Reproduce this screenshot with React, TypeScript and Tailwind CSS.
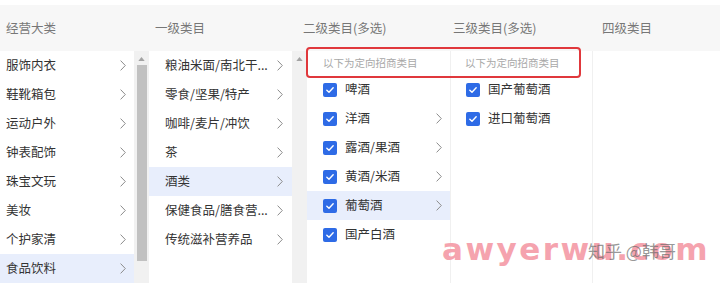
const level1 = ['服饰内衣', '鞋靴箱包', '运动户外', '钟表配饰', '珠宝文玩', '美妆', '个护家清', '食品饮料'];
const level2 = ['粮油米面/南北干...', '零食/坚果/特产', '咖啡/麦片/冲饮', '茶', '酒类', '保健食品/膳食营...', '传统滋补营养品'];
const level3 = [
  { name: '啤酒', more: false },
  { name: '洋酒', more: true },
  { name: '露酒/果酒', more: true },
  { name: '黄酒/米酒', more: true },
  { name: '葡萄酒', more: true },
  { name: '国产白酒', more: false },
];
const level4 = ['国产葡萄酒', '进口葡萄酒'];

function Arrow() {
  return (
    <svg viewBox="0 0 6 11" className="w-[6px] h-[11px] shrink-0" fill="none">
      <path d="M0.6 0.6 5.3 5.5 0.6 10.4" stroke="#8c8c8c" strokeWidth="1" />
    </svg>
  );
}

function Check() {
  return (
    <span className="w-[14px] h-[14px] rounded-[2px] bg-[#2e6be6] flex items-center justify-center shrink-0">
      <svg viewBox="0 0 12 12" className="w-[10px] h-[10px]" fill="none">
        <path d="M2.2 6.2 4.8 8.6 9.8 3.4" stroke="white" strokeWidth="1.7" strokeLinecap="round" strokeLinejoin="round" />
      </svg>
    </span>
  );
}

function ScrollTrack({ thumb }: { thumb: boolean }) {
  return (
    <div className="w-[15px] bg-[#f1f1f1] flex flex-col items-center pt-[6px]">
      <svg viewBox="0 0 8 5" className="w-[7px] h-[4px]">
        <path d="M4 0 8 5H0z" fill="#a3a3a3" />
      </svg>
      {thumb && <div className="mt-[4px] w-[10px] h-[196px] bg-[#c1c1c1]" />}
    </div>
  );
}

export default function App() {
  return (
    <div
      className="relative w-[720px] h-[283px] overflow-hidden bg-white text-[12.5px] text-[#333]"
      style={{ fontFamily: '"Noto Sans CJK SC", "Noto Sans", sans-serif' }}
    >
      {/* header */}
      <div className="mt-[5px] h-[46px] bg-[#f7f7f7] flex items-center text-[#777]">
        <div className="w-[149px] pl-[6px]">经营大类</div>
        <div className="w-[149px] pl-[6px]">一级类目</div>
        <div className="w-[149px] pl-[5px]">二级类目(多选)</div>
        <div className="w-[149px] pl-[6px]">三级类目(多选)</div>
        <div className="flex-1 pl-[6px]">四级类目</div>
      </div>

      {/* body */}
      <div className="flex h-[232px]">
        <div className="w-[134px]">
          {level1.map((item, i) => (
            <div
              key={item}
              className={`h-[29px] flex items-center justify-between pl-[6px] pr-[8px] ${i === 7 ? 'bg-[#e8eefc]' : ''}`}
            >
              <span>{item}</span>
              <Arrow />
            </div>
          ))}
        </div>
        <ScrollTrack thumb />

        <div className="w-[143px]">
          {level2.map((item, i) => (
            <div
              key={item}
              className={`h-[29px] flex items-center justify-between pl-[16px] pr-[9px] ${i === 4 ? 'bg-[#e8eefc]' : ''}`}
            >
              <span>{item}</span>
              <Arrow />
            </div>
          ))}
        </div>
        <ScrollTrack thumb={false} />

        <div className="w-[144px] border-r border-[#f0f0f0]">
          <div className="h-[24px] flex items-center pl-[16px] text-[10.5px] text-[#a8a8a8]">以下为定向招商类目</div>
          {level3.map((item, i) => (
            <div
              key={item.name}
              className={`h-[29px] flex items-center pl-[16px] pr-[8px] ${i === 4 ? 'bg-[#e8eefc]' : ''}`}
            >
              <Check />
              <span className="ml-[8px] flex-1">{item.name}</span>
              {item.more && <Arrow />}
            </div>
          ))}
        </div>

        <div className="w-[142px] border-r border-[#f0f0f0]">
          <div className="h-[24px] flex items-center pl-[14px] text-[10.5px] text-[#a8a8a8]">以下为定向招商类目</div>
          {level4.map((item) => (
            <div key={item} className="h-[29px] flex items-center pl-[15px]">
              <Check />
              <span className="ml-[8px]">{item}</span>
            </div>
          ))}
        </div>

        <div className="flex-1" />
      </div>

      {/* annotation */}
      <div className="absolute left-[306px] top-[47px] w-[275px] h-[31px] border-2 border-[#e0383c] rounded-[4px]" />

      {/* watermark */}
      <div
        className="absolute left-[442px] top-[234px] text-[31px] font-bold tracking-[2.5px] text-[#f5a3ae] leading-none"
        style={{ fontFamily: '"DejaVu Sans", sans-serif' }}
      >
        awyerwu.com
      </div>
      <div className="absolute left-[588px] top-[242px] text-[17px] text-[#6b6b6b]/70 leading-none">知乎 @韩哥</div>
    </div>
  );
}
